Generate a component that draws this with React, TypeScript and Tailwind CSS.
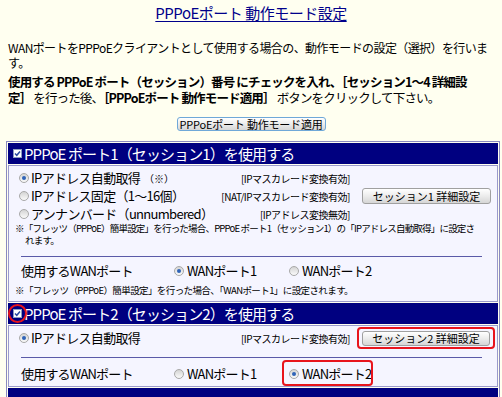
import React from "react";

const Radio = ({ checked }: { checked?: boolean }) => (
  <span className="inline-flex items-center justify-center w-[10px] h-[10px] rounded-full border border-[#a8a8a8] bg-gradient-to-b from-[#d4d4d4] to-[#fafafa] shrink-0">
    {checked && <span className="w-[4px] h-[4px] rounded-full bg-[#2f63b8]" />}
  </span>
);

const Check = () => (
  <svg width="9" height="9" viewBox="0 0 9 9" className="shrink-0">
    <rect x="0.5" y="0.5" width="8" height="8" fill="#fff" stroke="#8c9cc0" />
    <path d="M2 4.5 L3.8 6.3 L7 2.4" fill="none" stroke="#2a4ba0" strokeWidth="1.5" />
  </svg>
);

const Btn = ({ children, className = "" }: { children: React.ReactNode; className?: string }) => (
  <div
    className={`flex items-center justify-center rounded-[3px] border bg-gradient-to-b from-[#ffffff] via-[#ececec] to-[#d6d6d6] text-[11px] leading-none text-black whitespace-nowrap ${className}`}
  >
    {children}
  </div>
);

const Header = ({ n, marked }: { n: number; marked?: boolean }) => (
  <div className="h-[21px] bg-[#000080] flex items-center pl-[5px] gap-[2px] text-white text-[15px] leading-none tracking-[-0.9px] whitespace-nowrap overflow-hidden">
    <span className="relative flex">
      <Check />
      {marked && (
        <span className="absolute -left-[5px] -top-[5px] w-[19px] h-[19px] rounded-full border-2 border-[#e8141c]" />
      )}
    </span>
    <span>PPPoE ポート{n}（セッション{n}）を使用する</span>
  </div>
);

const Option = ({ checked, label, small }: { checked?: boolean; label: React.ReactNode; small?: string }) => (
  <div className="flex items-center gap-[2px] pl-[10px] w-[200px] whitespace-nowrap">
    <Radio checked={checked} />
    <span className="text-[13px] tracking-[-0.7px]">{label}</span>
    {small && <span className="text-[10px] ml-[2px]">{small}</span>}
  </div>
);

const Tag = ({ children }: { children: React.ReactNode }) => (
  <div className="w-[141px] text-right text-[10px] tracking-[-0.5px] whitespace-nowrap">{children}</div>
);

const Rule = () => <div className="ml-[12px] w-[461px] h-px bg-[#5a5aa8]" />;

const WanRow = ({ second }: { second?: boolean }) => (
  <div className="flex items-center h-[20px] whitespace-nowrap text-[13px] tracking-[-0.8px]">
    <div className="pl-[12px] w-[165px]">使用するWANポート</div>
    <div className="flex items-center gap-[3px] w-[115px]">
      <Radio checked={!second} />
      <span>WANポート1</span>
    </div>
    <div className="relative flex items-center gap-[3px]">
      <Radio checked={second} />
      <span>WANポート2</span>
      {second && (
        <span className="absolute -left-[7px] -top-[4px] w-[91px] h-[26px] rounded-[4px] border-2 border-[#e8141c]" />
      )}
    </div>
  </div>
);

export default function App() {
  return (
    <div
      className="w-[502px] h-[397px] overflow-hidden bg-[#fffff0] text-black pt-[3px]"
      style={{ fontFamily: '"Noto Sans CJK JP", "Liberation Sans", sans-serif' }}
    >
      <div className="text-center leading-[18px]">
        <span className="text-[15px] text-[#00008b] underline underline-offset-2 tracking-[-0.5px]">
          PPPoEポート 動作モード設定
        </span>
      </div>

      <p className="mt-[18px] px-[8px] text-[12px] leading-[15px] tracking-[-0.6px] whitespace-nowrap">
        WANポートをPPPoEクライアントとして使用する場合の、動作モードの設定（選択）を行いま
        <br />す。
      </p>

      <div className="mt-[4px] px-[8px] text-[12.5px] leading-[16px] tracking-[-0.85px] whitespace-nowrap">
        <div className="font-bold">使用する PPPoE ポート（セッション）番号 にチェックを入れ、［セッション1～4 詳細設</div>
        <div>
          <b>定］</b> を行った後、<b>［PPPoEポート 動作モード適用］</b> ボタンをクリックして下さい。
        </div>
      </div>

      <div className="mt-[11px] flex justify-center">
        <Btn className="w-[149px] h-[14px] border-[#6fa8d8] tracking-[-0.2px]">PPPoEポート 動作モード適用</Btn>
      </div>

      <div className="mt-[10px] ml-[6px] w-[494px] border border-[#8a8ac0] p-[1px] flex flex-col gap-[1px]">
        <Header n={1} />
        <div className="border border-[#9a9acc] bg-[#f5f5ff] pt-[3px] pb-[5px]">
          <div className="flex items-center h-[18px]">
            <Option checked label="IPアドレス自動取得" small="（※）" />
            <Tag>[IPマスカレード変換有効]</Tag>
          </div>
          <div className="flex items-center h-[18px]">
            <Option label="IPアドレス固定（1～16個）" />
            <Tag>[NAT/IPマスカレード変換有効]</Tag>
            <Btn className="ml-[12px] w-[129px] h-[16px] border-[#a0a0a0]">セッション1 詳細設定</Btn>
          </div>
          <div className="flex items-center h-[18px]">
            <Option label="アンナンバード（unnumbered）" />
            <Tag>[IPアドレス変換無効]</Tag>
          </div>
          <div className="pl-[6px] text-[9.5px] leading-[11.5px] tracking-[-0.8px] whitespace-nowrap">
            <div>※「フレッツ（PPPoE）簡単設定」を行った場合、PPPoE ポート1（セッション1）の「IPアドレス自動取得」に設定さ</div>
            <div className="pl-[10px]">れます。</div>
          </div>
          <div className="mt-[10px]">
            <Rule />
          </div>
          <div className="mt-[4px]">
            <WanRow />
          </div>
          <p className="mt-[3px] h-[12px] pl-[6px] text-[9.5px] leading-[12px] tracking-[-0.6px] whitespace-nowrap">
            ※「フレッツ（PPPoE）簡単設定」を行った場合、「WANポート1」に設定されます。
          </p>
        </div>

        <Header n={2} marked />
        <div className="border border-[#9a9acc] bg-[#f5f5ff] pt-[3px] pb-[2px]">
          <div className="flex items-center h-[18px]">
            <Option checked label="IPアドレス自動取得" />
            <Tag>[IPマスカレード変換有効]</Tag>
            <div className="relative ml-[12px]">
              <Btn className="w-[128px] h-[15px] border-[#a0a0a0]">セッション2 詳細設定</Btn>
              <span className="absolute -left-[5px] -top-[4px] w-[138px] h-[22px] rounded-[4px] border-2 border-[#e8141c]" />
            </div>
          </div>
          <div className="mt-[10px]">
            <Rule />
          </div>
          <div className="mt-[6px]">
            <WanRow second />
          </div>
        </div>
        <div className="h-[21px] bg-[#000080]" />
      </div>
    </div>
  );
}
